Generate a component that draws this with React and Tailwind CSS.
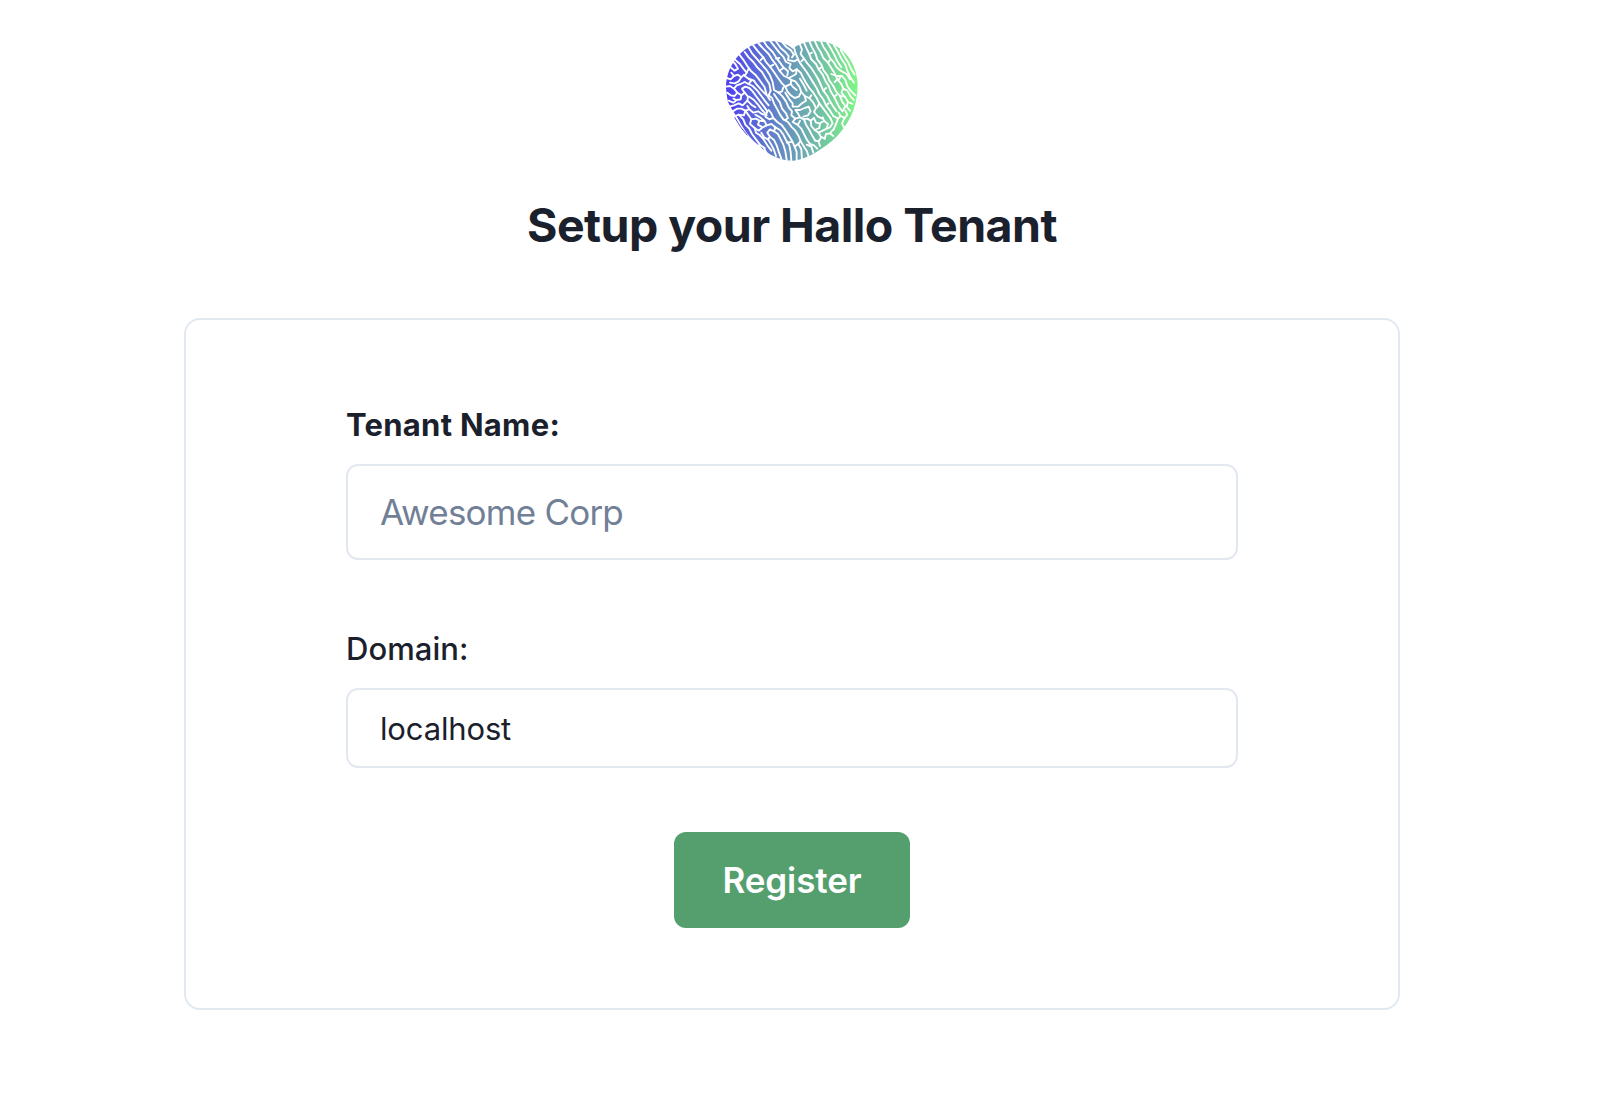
const grooves = [
  // upper left
  "M42 108L54 118L64 112L56 98L50 92M54 84L70 98L80 112L90 124L84 134L96 142L112 148",
  "M68 70L82 88L92 104L102 118L116 130L130 148L144 168L150 190L160 206",
  "M84 62L96 78L110 92L122 108L136 122L148 142L158 158L162 178",
  "M94 46L106 66L122 84L134 98L148 114L160 132L168 152L172 176L186 184",
  "M108 40L124 60L140 78L148 92L160 106L172 122L184 140L196 156L206 166",
  "M124 34L140 52L156 68L166 84L178 100L188 118L202 134L216 140",
  "M140 28L152 46L168 62L178 78L190 94L200 108L214 120L212 132",
  "M160 28L174 46L188 64L200 76L208 92L222 98L218 110L228 120L240 114",
  "M178 30L192 50L206 62L216 74L214 86L232 90L244 84M196 32L208 46L222 56L232 70L226 78",
  "M132 86L140 78M96 112L90 124M160 106L170 100M188 80L178 82M200 110L192 116M134 46L128 40",
  // upper right
  "M232 48L236 64L242 78L248 92L258 106L270 122L280 138L290 154",
  "M250 40L256 54L252 68L262 82L272 96L284 110L294 126L304 142L312 160",
  "M262 34L270 52L278 68L284 84L298 98L306 114L318 130L326 148L336 164",
  "M278 30L286 48L296 66L302 84L314 100L320 116L332 132L338 148L350 164",
  "M294 28L302 46L312 62L320 80L334 94L344 110L354 126L362 144L374 158",
  "M312 28L320 46L331 62L340 80L352 94L360 108L372 118L390 128",
  "M332 34L344 54L354 72L362 90L374 108",
  "M352 42L364 62L374 82L386 100L392 118L400 136L412 154",
  "M372 56L384 76L396 96L404 114L414 130",
  "M262 82L254 90M306 114L314 108M334 94L340 86M278 68L286 64M344 128L360 134L376 134L386 146L392 164L402 178L416 192",
  "M390 128L400 144M362 144L354 152M372 134L366 146",
  // left edge
  "M30 140L42 144L52 134L64 130L74 138L66 150L54 156L40 154M52 134L44 124M74 138L82 130",
  "M28 166L40 164L52 172L62 184L54 194L42 192L32 184M52 172L60 162L72 158L84 152L96 158",
  "M62 184L74 192L84 184L76 172L86 166L98 170L108 180L118 194L130 210L142 226L152 240",
  "M74 192L72 204L60 206L50 202M84 184L94 196L92 208L104 220L116 228M36 208L50 214L60 206",
  "M96 158L108 164L122 178L134 194L146 210L156 222M112 148L120 160L136 178L148 190",
  "M96 158L104 148L96 142M98 196L112 206L124 220L136 236L146 246",
  "M38 226L52 222L66 216L78 222L92 208M48 240L62 232L74 232L86 238L82 252L66 250L56 254",
  "M86 238L98 234L110 244L124 240L136 248L150 252M98 234L92 224",
  // middle
  "M162 178L156 192L166 200L172 216L182 234L190 250L200 264",
  "M172 188L180 200L190 214L196 232L208 246L214 260L206 266",
  "M186 184L198 196L208 210L216 228L226 240L224 252L236 262",
  "M206 166L212 180L222 192L234 200L246 196L254 182L248 166L236 150L224 146",
  "M206 184L218 204L228 216L228 226L244 226L256 216L268 208L264 194L254 182",
  "M216 140L224 146L222 158L230 168L240 176M240 114L252 124L260 140L268 154L278 170L290 184L300 200L308 216",
  "M240 114L238 128L228 134L216 140M250 142L262 162L270 178M206 166L218 160L222 158M186 184L196 180L200 168",
  "M290 154L300 170L308 188L320 204L328 222L340 238L350 254",
  "M304 142L312 160L320 178L332 194L340 210L350 226L360 240",
  "M336 164L342 180L352 196L360 212L368 228L378 240M350 164L358 180L370 194L376 210L386 224L380 236",
  "M374 158L380 172L374 184L386 198L394 212L408 218M380 172L392 178L402 196L412 206M320 178L328 170M352 196L360 190",
  "M370 194L384 196M394 212L390 226L400 238M264 194L278 200L290 214L298 230L292 242L304 256L318 262",
  "M308 216L302 228M308 216L320 232L332 248L342 262M278 200L284 192M328 222L336 216",
  // lower centre
  "M152 240L146 256L158 264L170 260L164 246L156 236M170 260L182 272L196 282L206 296L216 312L226 328L234 346",
  "M236 262L250 258L244 246L236 236L250 236L264 230L276 226L282 240L274 252L260 256M250 258L262 264L272 262L282 268L292 260",
  "M200 264L214 272L224 286L236 298L246 314L252 330L262 346M236 262L228 272L242 280L254 292L262 308L270 324L280 338",
  "M250 268L244 280M262 264L268 280L278 296L286 312L296 328M282 268L284 284L294 296L306 304L312 316L324 322",
  "M292 260L298 274L310 276L308 290L294 296M310 276L322 268L318 258M322 268L334 278L330 292L318 298L306 304",
  "M342 262L348 276L340 288L330 292M350 254L364 262L372 254L366 244M364 262L358 278L350 296M372 254L384 260L392 250L386 238",
  "M384 260L376 276L382 288M348 296L340 306L328 308L324 322M340 306L350 314",
  // lower left
  "M66 250L80 264L86 280L98 292L106 308L118 324L130 340M86 238L96 252L104 264L100 278L114 290L118 304L130 312",
  "M104 264L118 262L128 268L124 280L138 288L150 282L144 270L130 258L116 250M128 268L144 270M114 290L126 298L138 288",
  "M150 282L164 278L176 288L172 300L160 294L152 304L160 316L154 324L142 318L134 304M130 312L142 326L152 342L164 358",
  "M172 300L184 308L192 324L200 340L206 360L210 386M176 288L190 296L200 310L208 326L218 342L222 362L224 388",
  "M160 316L172 326L180 342L186 360L194 382M154 324L164 340L172 356L178 374M130 340L144 350M142 350L150 366",
  "M234 346L240 362L240 388M246 340L254 354L256 386M262 346L270 358L276 376M270 340L284 346L290 364",
  "M280 338L292 342L302 352M296 328L306 330L310 344M306 330L314 318M224 332L210 334M252 330L244 338L234 346",
];

const heart =
  "M228 52C205 32 180 29 155 30C85 32 28 95 28 170C29 184 31 198 34 212C42 228 52 244 62 258C76 284 94 318 124 340C130 338 132 350 142 356C166 376 196 388 230 388C265 385 300 365 345 330C395 285 423 230 423 160C420 85 370 30 300 30C270 30 245 38 228 52Z";

function Logo() {
  return (
    <svg viewBox="28 29 396 360" className="h-[120px] w-[132px]" aria-hidden="true">
      <defs>
        <linearGradient id="hue" gradientUnits="userSpaceOnUse" x1="28" y1="180" x2="424" y2="180">
          <stop offset="0" stopColor="#4f3df0" />
          <stop offset="1" stopColor="#80f784" />
        </linearGradient>
      </defs>
      <path d={heart} fill="url(#hue)" />
      <g stroke="#fff" strokeWidth="5.6" strokeLinecap="round" strokeLinejoin="round" fill="none">
        {grooves.map((d) => (
          <path key={d} d={d} />
        ))}
      </g>
      <path d="M54 258Q70 288 92 312" stroke="url(#hue)" strokeWidth="3" fill="none" />
    </svg>
  );
}

const field =
  "block w-full rounded-xl border-2 border-[#e2e8f0] bg-white px-8 outline-none placeholder:text-[#718096] placeholder:opacity-100";

export default function App() {
  return (
    <main className="flex min-h-screen w-[1584px] flex-col items-center bg-white pt-[41px] font-['Inter',sans-serif] text-[#1a202c]">
      <Logo />
      <h1 className="mt-9 text-[46.5px] leading-[56px] font-bold tracking-[-0.55px]">Setup your Hallo Tenant</h1>
      <form className="mt-[65px] flex w-[1216px] flex-col items-center rounded-2xl border-2 border-[#e2e8f0] px-40 py-20">
        <label className="w-full">
          <span className="mb-[15px] block pt-px text-[31px] leading-[48px] font-bold tracking-[0.27px]">Tenant Name:</span>
          <input className={`${field} h-24 text-[35px] tracking-[-0.77px]`} placeholder="Awesome Corp" />
        </label>
        <label className="mt-16 w-full">
          <span className="mb-[15px] block pt-px text-[31px] leading-[48px] font-medium tracking-[0.05px]">Domain:</span>
          <input className={`${field} h-20 text-[31px] tracking-[-0.15px]`} defaultValue="localhost" />
        </label>
        <button type="button" className="mt-16 h-24 w-[236px] rounded-xl bg-[#559e6e] text-[35px] font-semibold tracking-[-0.1px] text-white">
          Register
        </button>
      </form>
    </main>
  );
}
